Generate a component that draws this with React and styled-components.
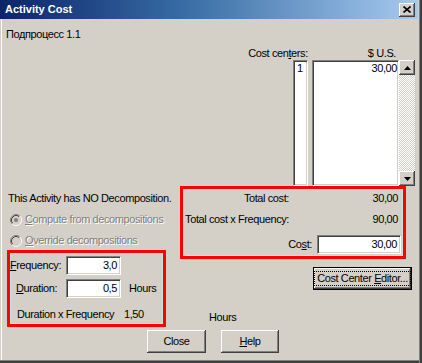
import React from 'react';
import styled, { createGlobalStyle, css } from 'styled-components';

const GlobalStyle = createGlobalStyle`
  html, body { margin: 0; padding: 0; background: #d4d0c8; }
  body {
    font-family: "Liberation Sans", Arial, sans-serif;
    font-size: 11px;
    line-height: 13px;
    letter-spacing: -0.4px;
    color: #000;
  }
  * { box-sizing: border-box; }
`;

const sunken = css`
  background: #fff;
  border: 1px solid;
  border-color: #808080 #fff #fff #808080;
  box-shadow: inset 1px 1px #404040, inset -1px -1px #d4d0c8;
`;

const raised = css`
  background: #d4d0c8;
  box-shadow: inset -1px -1px #404040, inset 1px 1px #fff,
    inset -2px -2px #808080, inset 2px 2px #d4d0c8;
`;

const Window = styled.div`
  width: 422px;
  height: 363px;
  display: flex;
  flex-direction: column;
  background: #d4d0c8;
  padding: 0 4px 3px 0;
  box-shadow: inset -1px 0 #404040, inset -2px 0 #404040, inset -3px 0 #808080,
    inset 0 -1px #404040, inset 0 -2px #404040, inset 0 -3px #808080;
`;

const TitleBar = styled.div`
  height: 19px;
  flex: none;
  display: flex;
  align-items: center;
  justify-content: space-between;
  padding: 0 3px 0 5px;
  background: linear-gradient(to right, #0a246a 0%, #3a6ea5 45%, #a6caf0 100%);
  color: #fff;
  font-weight: bold;
  letter-spacing: 0;
`;

const TitleButton = styled.div`
  width: 16px;
  height: 14px;
  display: flex;
  align-items: center;
  justify-content: center;
  ${raised};
`;

const Body = styled.div`
  flex: 1;
  display: flex;
  flex-direction: column;
  padding-left: 2px;
  box-shadow: inset 1px 0 #d4d0c8, inset 2px 0 #fff;
`;

const Subtitle = styled.div`
  margin: 9px 0 0 4px;
`;

const CostHeader = styled.div`
  margin-top: 6px;
  height: 13px;
  display: flex;
  justify-content: flex-end;
  padding-right: 22px;
`;

const HeaderLabel = styled.span`
  margin-right: ${(p) => p.$gap || 0}px;
`;

const ListsRow = styled.div`
  height: 126px;
  display: flex;
  justify-content: flex-end;
  padding-right: 3px;
`;

const ListBox = styled.div`
  ${sunken};
  width: ${(p) => p.$width}px;
  margin-right: ${(p) => p.$gap || 0}px;
  padding: 1px ${(p) => (p.$right ? 1 : 2)}px 0 ${(p) => (p.$right ? 2 : 3)}px;
  text-align: ${(p) => (p.$right ? 'right' : 'left')};
`;

const ScrollBar = styled.div`
  width: 16px;
  display: flex;
  flex-direction: column;
`;

const ScrollButton = styled.div`
  ${raised};
  height: 15px;
  flex: none;
  display: flex;
  align-items: center;
  justify-content: center;
`;

const ScrollTrack = styled.div`
  flex: 1;
  background-color: #fff;
  background-image: repeating-conic-gradient(#d4d0c8 0 25%, #fff 0 50%);
  background-size: 2px 2px;
`;

const Lower = styled.div`
  display: flex;
`;

const LeftCol = styled.div`
  width: 172px;
  display: flex;
  flex-direction: column;
`;

const RightCol = styled.div`
  margin-left: 6px;
  display: flex;
  flex-direction: column;
`;

const InfoText = styled.div`
  margin: 6px 0 0 6px;
`;

const RadioRow = styled.div`
  margin: 8px 0 0 8px;
  display: flex;
  align-items: center;
  gap: 3px;
  height: 13px;
`;

const DisabledText = styled.span`
  color: #808080;
  text-shadow: 1px 1px 0 #fff;
`;

const Highlight = styled.div`
  border: 3px solid #ff0000;
  box-shadow: inset 0 0 0 1px #bfe4e4;
  width: ${(p) => p.$width}px;
  height: ${(p) => p.$height}px;
  margin: ${(p) => p.$margin || 0};
`;

const TotalsRow = styled.div`
  display: grid;
  grid-template-columns: 106px 109px;
  margin-top: ${(p) => p.$top}px;
`;

const Cell = styled.div`
  text-align: ${(p) => p.$align || 'left'};
`;

const CostRow = styled.div`
  margin-top: 9px;
  display: flex;
  justify-content: flex-end;
  align-items: center;
  gap: 5px;
  padding-right: 2px;
`;

const Field = styled.div`
  ${sunken};
  width: ${(p) => p.$width}px;
  height: 19px;
  display: flex;
  align-items: center;
  justify-content: flex-end;
  padding-right: 3px;
`;

const FieldRow = styled.div`
  display: grid;
  grid-template-columns: 56px 55px auto;
  align-items: center;
  margin-top: ${(p) => p.$top}px;
`;

const FieldLabel = styled.span`
  padding-left: ${(p) => p.$indent || 0}px;
`;

const Unit = styled.span`
  margin-left: 8px;
`;

const ProductRow = styled.div`
  display: grid;
  grid-template-columns: 107px auto;
  padding-left: 7px;
  margin-top: 10px;
`;

const Button = styled.div`
  ${raised};
  width: ${(p) => p.$width}px;
  height: 23px;
  display: flex;
  align-items: center;
  justify-content: center;
  margin: ${(p) => p.$margin || 0};
  ${(p) =>
    p.$default &&
    css`
      border: 1px solid #000;
    `}
`;

const FocusRing = styled.span`
  border: 1px dotted #000;
  padding: 0 2px 1px 2px;
  line-height: 12px;
`;

const Hours = styled.div`
  margin: 21px 0 0 29px;
`;

const ButtonsRow = styled.div`
  margin-top: 3px;
  display: flex;
  padding-left: 145px;
  gap: 15px;
`;

const Key = styled.u`
  text-decoration: underline;
`;

function Radio({ checked }) {
  return (
    <svg width="12" height="12" viewBox="0 0 12 12">
      <circle cx="6" cy="6" r="4.5" fill="#d4d0c8" />
      <path d="M2.11 9.89A5.5 5.5 0 0 1 9.89 2.11" stroke="#808080" fill="none" />
      <path d="M9.89 2.11A5.5 5.5 0 0 1 2.11 9.89" stroke="#fff" fill="none" />
      <path d="M2.82 9.18A4.5 4.5 0 0 1 9.18 2.82" stroke="#404040" fill="none" />
      <path d="M9.18 2.82A4.5 4.5 0 0 1 2.82 9.18" stroke="#d4d0c8" fill="none" />
      {checked && <circle cx="6" cy="6" r="2" fill="#808080" />}
    </svg>
  );
}

function Arrow({ down }) {
  return (
    <svg width="7" height="4" viewBox="0 0 7 4">
      <path d={down ? 'M0 0H7L3.5 4Z' : 'M0 4H7L3.5 0Z'} fill="#000" />
    </svg>
  );
}

export default function App() {
  return (
    <>
      <GlobalStyle />
      <Window>
        <TitleBar>
          <span>Activity Cost</span>
          <TitleButton>
            <svg width="8" height="7" viewBox="0 0 8 7">
              <path d="M0.5 0.5L7.5 6.5M7.5 0.5L0.5 6.5" stroke="#000" strokeWidth="1.6" />
            </svg>
          </TitleButton>
        </TitleBar>
        <Body>
          <Subtitle>Подпроцесс 1.1</Subtitle>
          <CostHeader>
            <HeaderLabel $gap={60}>
              Cost cen<Key>t</Key>ers:
            </HeaderLabel>
            <HeaderLabel>$ U.S.</HeaderLabel>
          </CostHeader>
          <ListsRow>
            <ListBox $width={15} $gap={4}>1</ListBox>
            <ListBox $width={87} $right>
              30,00
            </ListBox>
            <ScrollBar>
              <ScrollButton>
                <Arrow />
              </ScrollButton>
              <ScrollTrack />
              <ScrollButton>
                <Arrow down />
              </ScrollButton>
            </ScrollBar>
          </ListsRow>
          <Lower>
            <LeftCol>
              <InfoText>This Activity has NO Decomposition.</InfoText>
              <RadioRow>
                <Radio checked />
                <DisabledText>
                  <Key>C</Key>ompute from decompositions
                </DisabledText>
              </RadioRow>
              <RadioRow>
                <Radio />
                <DisabledText>
                  <Key>O</Key>verride decompositions
                </DisabledText>
              </RadioRow>
              <Highlight $width={159} $height={77} $margin="3px 0 0 5px">
                <FieldRow $top={3}>
                  <FieldLabel>
                    <Key>F</Key>requency:
                  </FieldLabel>
                  <Field $width={55}>3,0</Field>
                </FieldRow>
                <FieldRow $top={4}>
                  <FieldLabel $indent={6}>
                    <Key>D</Key>uration:
                  </FieldLabel>
                  <Field $width={55}>0,5</Field>
                  <Unit>Hours</Unit>
                </FieldRow>
                <ProductRow>
                  <span>Duration x Frequency</span>
                  <span>1,50</span>
                </ProductRow>
              </Highlight>
            </LeftCol>
            <RightCol>
              <Highlight $width={226} $height={73}>
                <TotalsRow $top={3}>
                  <Cell $align="right">Total cost:</Cell>
                  <Cell $align="right">30,00</Cell>
                </TotalsRow>
                <TotalsRow $top={8}>
                  <Cell $align="right">Total cost x Frequency:</Cell>
                  <Cell $align="right">90,00</Cell>
                </TotalsRow>
                <CostRow>
                  <span>
                    Co<Key>s</Key>t:
                  </span>
                  <Field $width={84}>30,00</Field>
                </CostRow>
              </Highlight>
              <Button $default $width={99} $margin="8px 0 0 133px">
                <FocusRing>
                  Cost Center <Key>E</Key>ditor...
                </FocusRing>
              </Button>
              <Hours>Hours</Hours>
            </RightCol>
          </Lower>
          <ButtonsRow>
            <Button $width={59}>Close</Button>
            <Button $width={58}>
              <span>
                <Key>H</Key>elp
              </span>
            </Button>
          </ButtonsRow>
        </Body>
      </Window>
    </>
  );
}
